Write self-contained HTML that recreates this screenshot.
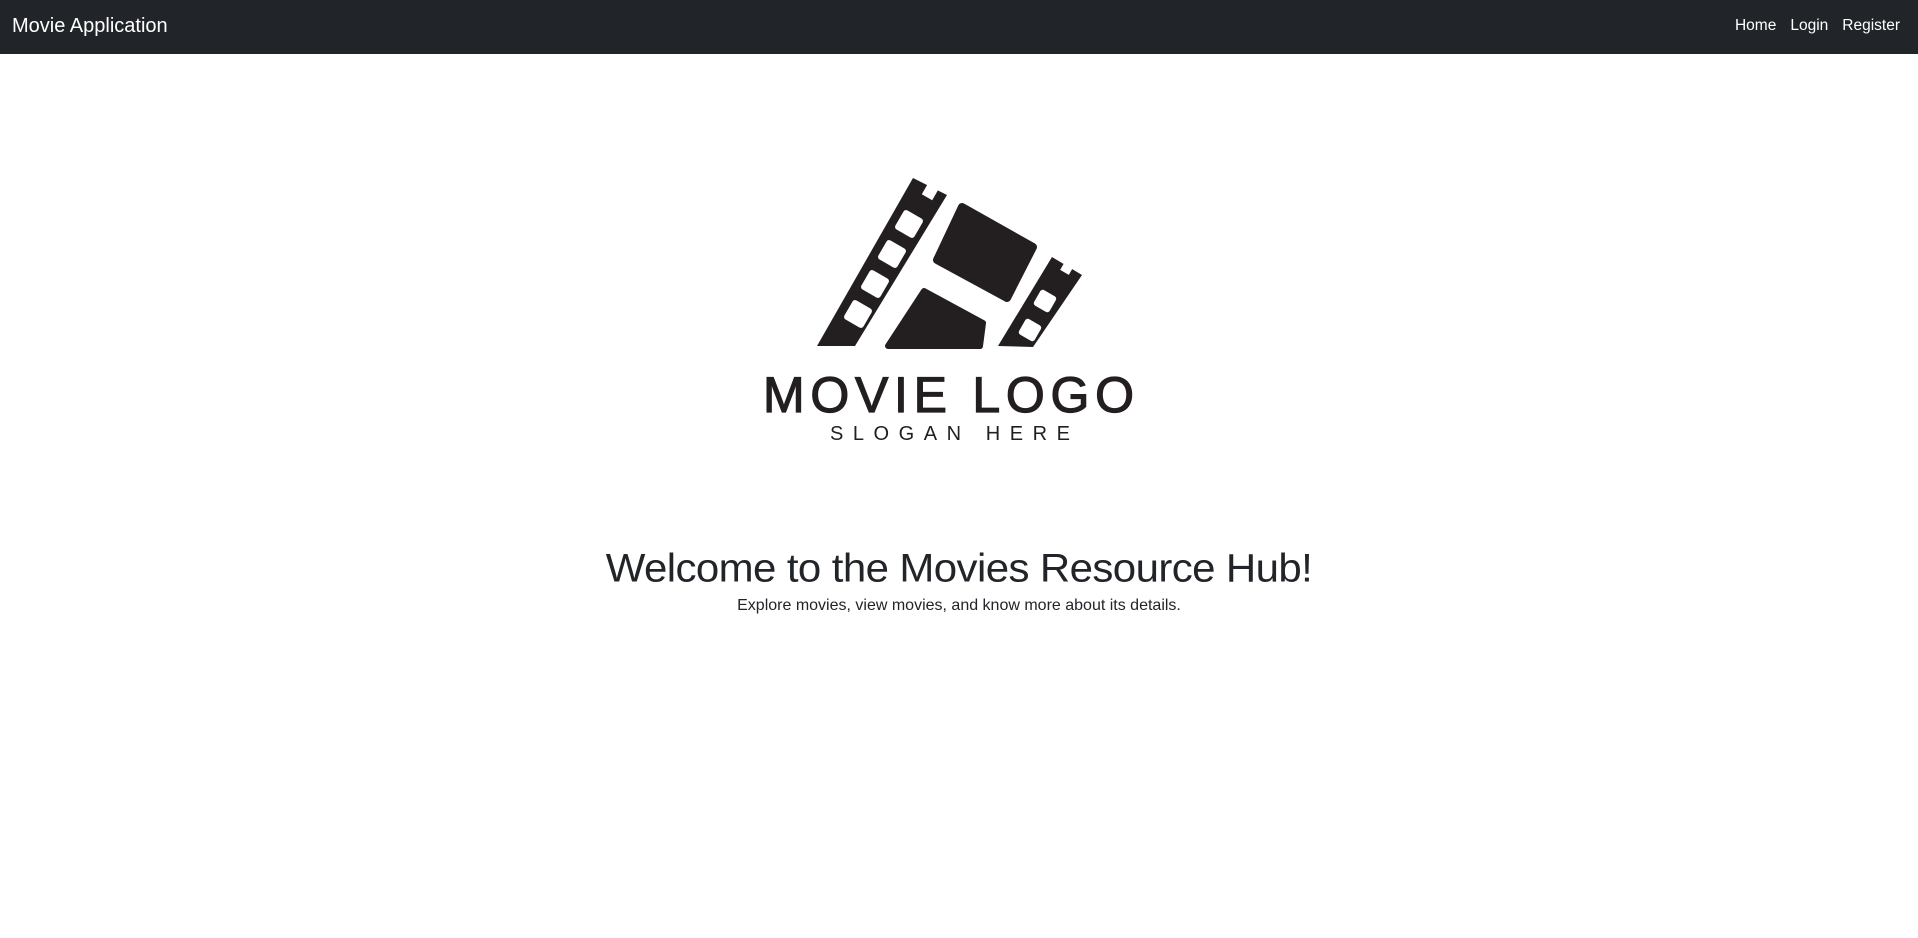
<!DOCTYPE html>
<html><head><meta charset="utf-8"><style>
html,body{margin:0;padding:0;width:1918px;height:938px;background:#fff;overflow:hidden;font-family:"Liberation Sans",sans-serif;color:#212529}
.nav{position:absolute;left:0;top:0;width:1918px;height:54px;background:#212529;color:#fff}
.brand{position:absolute;left:12px;top:15px;font-size:20px}
.links{position:absolute;right:18px;top:17px;font-size:15.5px}
.links span{margin-left:14px}
h1{position:absolute;left:0;width:1918px;top:544px;margin:0;text-align:center;font-size:42px;font-weight:normal;letter-spacing:-0.6px;transform:scaleY(0.95)}
p{position:absolute;left:0;width:1918px;top:597px;margin:0;text-align:center;font-size:16px}
svg{position:absolute;left:740px;top:160px}
</style></head><body>
<div class="nav"><div class="brand">Movie Application</div><div class="links"><span>Home</span><span>Login</span><span>Register</span></div></div>
<svg width="420" height="300" viewBox="0 0 420 300">
<g fill="#231f20">
<polygon points="77,186 173,18 207,35 115,186"/>
<polygon points="258,186 312,97 342,115 293,187"/>
<polygon points="222,47 293,87 267,138 197,100" stroke="#231f20" stroke-width="8" stroke-linejoin="round"/>
<polygon points="184,131 243,163 240,186 148,186" stroke="#231f20" stroke-width="6" stroke-linejoin="round"/>
</g>
<g fill="#fff">
<rect x="-11" y="-11" width="22" height="22" rx="3" transform="translate(169,64) rotate(30)"/>
<rect x="-11" y="-11" width="22" height="22" rx="3" transform="translate(152,94) rotate(30)"/>
<rect x="-11" y="-11" width="22" height="22" rx="3" transform="translate(135,124) rotate(30)"/>
<rect x="-11" y="-11" width="22" height="22" rx="3" transform="translate(118,154) rotate(30)"/>
<rect x="-9" y="-9" width="18" height="18" rx="3" transform="translate(305,141) rotate(30)"/>
<rect x="-9" y="-9" width="18" height="18" rx="3" transform="translate(290,170) rotate(30)"/>
<rect x="-6" y="-6" width="12" height="12" transform="translate(190,32) rotate(30)"/>
<rect x="-5" y="-5" width="10" height="10" transform="translate(327,108) rotate(30)"/>
</g>
<text x="23" y="252" font-size="50" fill="#231f20" stroke="#231f20" stroke-width="1.2" textLength="371" lengthAdjust="spacing" font-family="Liberation Sans,sans-serif">MOVIE LOGO</text>
<text x="90" y="280" font-size="20" fill="#231f20" textLength="240" lengthAdjust="spacing" font-family="Liberation Sans,sans-serif">SLOGAN HERE</text>
</svg>
<h1>Welcome to the Movies Resource Hub!</h1>
<p>Explore movies, view movies, and know more about its details.</p>
</body></html>
